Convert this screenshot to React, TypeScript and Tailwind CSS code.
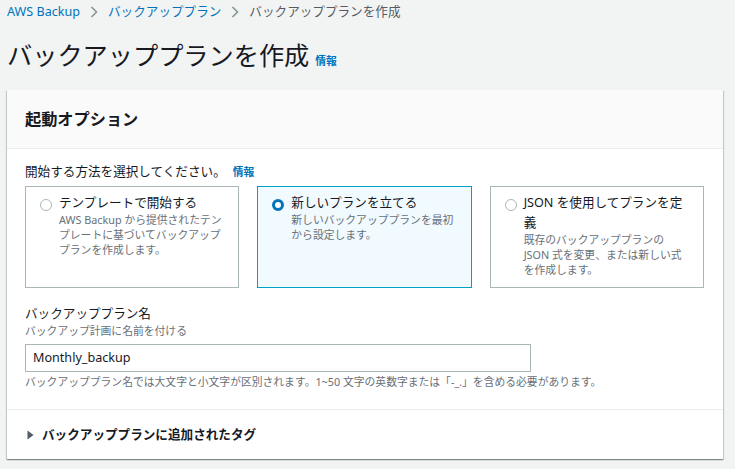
import React from "react";

const FONT = { fontFamily: '"Noto Sans", "Noto Sans CJK JP", sans-serif' };

function Chevron() {
  return (
    <svg width="10" height="14" viewBox="0 0 10 14" className="mx-[9px]">
      <path d="M2.5 2 L7.5 7 L2.5 12" fill="none" stroke="#879596" strokeWidth="1.6" />
    </svg>
  );
}

function Radio({ checked }: { checked?: boolean }) {
  if (checked) {
    return (
      <span className="mt-[6px] box-border block h-[12px] w-[12px] shrink-0 rounded-full border-[3.5px] border-[#0073bb] bg-white" />
    );
  }
  return (
    <span className="mt-[6px] box-border block h-[12px] w-[12px] shrink-0 rounded-full border border-[#aab7b8] bg-white" />
  );
}

function Tile({
  checked,
  title,
  desc,
}: {
  checked?: boolean;
  title: React.ReactNode;
  desc: React.ReactNode;
}) {
  return (
    <div
      className={
        checked
          ? "box-border flex h-[102px] gap-[7px] border border-[#00a1c9] bg-[#f1faff] pl-[14px] pr-[12px] pt-[6px]"
          : "box-border flex h-[102px] gap-[7px] border border-[#aab7b8] bg-white pl-[14px] pr-[12px] pt-[6px]"
      }
    >
      <Radio checked={checked} />
      <div className="min-w-0">
        <div className="text-[12.6px] leading-[20px] text-[#16191f]">{title}</div>
        <div className="mt-[-1px] text-[10.8px] leading-[15px] text-[#687078]">{desc}</div>
      </div>
    </div>
  );
}

export default function App() {
  return (
    <div className="h-[469px] w-[735px] overflow-hidden bg-[#f2f3f3]" style={FONT}>
      <div className="flex items-center px-[7px] pt-[3px] text-[12.6px] leading-[18px]">
        <span className="text-[#0073bb]">AWS Backup</span>
        <Chevron />
        <span className="text-[#0073bb]">バックアッププラン</span>
        <Chevron />
        <span className="text-[#545b64]">バックアッププランを作成</span>
      </div>

      <div className="mt-[18px] flex items-end px-[7px]">
        <h1 className="text-[25.2px] leading-[32px] font-normal text-[#16191f]">
          バックアッププランを作成
        </h1>
        <span className="mb-[2px] ml-[6px] text-[10.8px] leading-[16px] font-bold text-[#0073bb]">情報</span>
      </div>

      <div className="ml-[7px] mt-[19px] w-[716px] bg-white shadow-[0_1px_1px_0_rgba(0,28,36,0.3),1px_1px_1px_0_rgba(0,28,36,0.15),-1px_1px_1px_0_rgba(0,28,36,0.15)]">
        <div className="flex h-[59px] items-center border-b border-[#eaeded] bg-[#fafafa] px-[18px]">
          <h2 className="text-[16.2px] leading-[22px] font-bold text-[#16191f]">起動オプション</h2>
        </div>

        <div className="px-[18px] pb-[20px] pr-[19px] pt-[14px]">
          <div className="flex items-center text-[12.6px] leading-[18px] text-[#16191f]">
            <span>開始する方法を選択してください。</span>
            <span className="ml-[7px] text-[10.8px] font-bold text-[#0073bb]">情報</span>
          </div>

          <div className="mt-[5px] grid grid-cols-3 gap-[18px]">
            <Tile
              title="テンプレートで開始する"
              desc={
                <>
                  AWS Backup から提供されたテン
                  <br />
                  プレートに基づいてバックアップ
                  <br />
                  プランを作成します。
                </>
              }
            />
            <Tile
              checked
              title="新しいプランを立てる"
              desc={
                <>
                  新しいバックアッププランを最初
                  <br />
                  から設定します。
                </>
              }
            />
            <Tile
              title={
                <>
                  JSON を使用してプランを定
                  <br />
                  義
                </>
              }
              desc={
                <>
                  既存のバックアッププランの
                  <br />
                  JSON 式を変更、または新しい式
                  <br />
                  を作成します。
                </>
              }
            />
          </div>

          <div className="mt-[17px] text-[12.6px] leading-[18px] text-[#16191f]">バックアッププラン名</div>
          <div className="text-[10.8px] leading-[15px] text-[#687078]">バックアップ計画に名前を付ける</div>
          <div className="mt-[6px] box-border flex h-[28px] w-[506px] items-center border border-[#aab7b8] bg-white px-[7px] text-[12.6px] text-[#16191f]">
            Monthly_backup
          </div>
          <div className="mt-[3px] text-[10.8px] leading-[14px] text-[#687078]">
            バックアッププラン名では大文字と小文字が区別されます。1~50 文字の英数字または「-_.」を含める必要があります。
          </div>
        </div>

        <div className="flex h-[50px] items-center border-t border-[#eaeded] px-[20px]">
          <svg width="7" height="10" viewBox="0 0 7 10" className="mr-[8px]">
            <path d="M0.5 0.5 L6.5 5 L0.5 9.5 Z" fill="#545b64" />
          </svg>
          <span className="text-[12.6px] leading-[18px] font-bold text-[#16191f]">
            バックアッププランに追加されたタグ
          </span>
        </div>
      </div>
    </div>
  );
}
